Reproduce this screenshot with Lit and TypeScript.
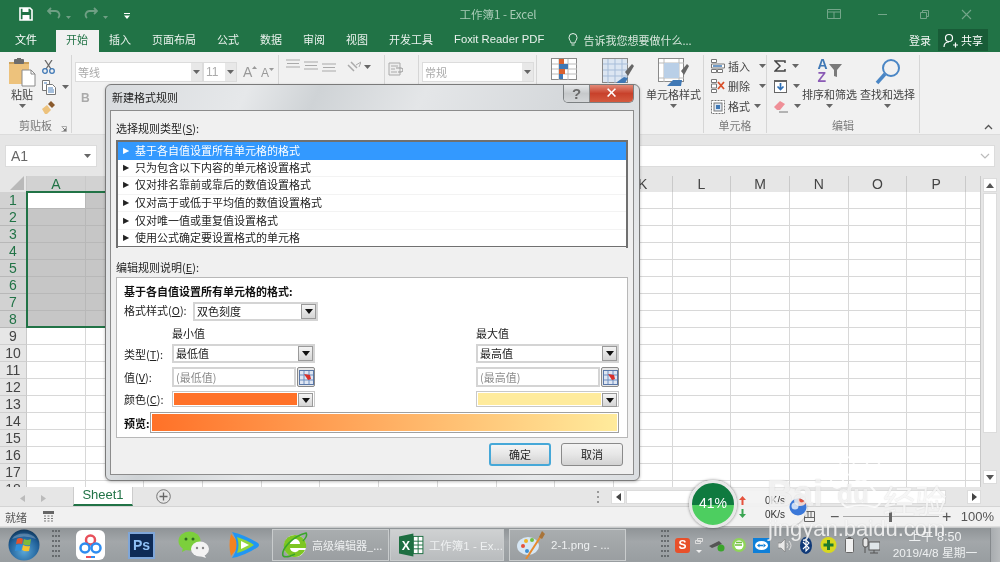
import { LitElement, html, css, svg } from "lit";
import { customElement } from "lit/decorators.js";

const caret = html`<svg class="caret" width="7" height="4" viewBox="0 0 7 4"><path d="M0 0h7L3.500 4z" fill="#666"/></svg>`;
const tri = html`<svg width="8" height="5" viewBox="0 0 8 5"><path d="M0 0h8L4 5z" fill="#111"/></svg>`;
const refIcon = html`<svg width="15" height="15" viewBox="0 0 15 15"><rect x=".5" y=".5" width="14" height="14" fill="#dfe6f2" stroke="#5a78a8"/><path d="M1 5h13M1 10h13M5 1v13M10 1v13" stroke="#6f8fc0"/><path d="M5 4l6 1 1 4-3 1z" fill="#d9302a"/></svg>`;

const ddBtn = html`<span class="ddb">${tri}</span>`;

const columns = "ABCDEFGHIJKLMNOPQ".split("");
const visibleHeader = (c: string) => ("AB".includes(c) || "KLMNOP".includes(c) ? c : "");
const rowsN = Array.from({ length: 18 }, (_, i) => i + 1);

const rules = [
  "基于各自值设置所有单元格的格式",
  "只为包含以下内容的单元格设置格式",
  "仅对排名靠前或靠后的数值设置格式",
  "仅对高于或低于平均值的数值设置格式",
  "仅对唯一值或重复值设置格式",
  "使用公式确定要设置格式的单元格",
];

const tabs = ["插入", "页面布局", "公式", "数据", "审阅", "视图", "开发工具", "Foxit Reader PDF"];

const saveIcon = html`<svg width="14" height="14" viewBox="0 0 14 14"><path d="M1 1h10l2 2v10H1z" fill="none" stroke="#fff" stroke-width="1.6"/><rect x="3.500" y="1" width="6" height="4" fill="#fff"/><rect x="3.500" y="8" width="7" height="5" fill="#fff"/></svg>`;
const undoIcon = html`<svg width="14" height="12" viewBox="0 0 14 12"><path d="M4 1L1 4l3 3M1 4h7a4 4 0 0 1 3 7" fill="none" stroke="#6f9f84" stroke-width="1.8"/></svg>`;
const redoIcon = html`<svg width="14" height="12" viewBox="0 0 14 12"><path d="M10 1l3 3-3 3M13 4H6a4 4 0 0 0-3 7" fill="none" stroke="#6f9f84" stroke-width="1.8"/></svg>`;
const smallDown = html`<svg width="5" height="3" viewBox="0 0 5 3"><path d="M0 0h5L2.500 3z" fill="#6f9f84"/></svg>`;
const qatMore = html`<svg width="6" height="6" viewBox="0 0 6 6"><path d="M0 0h6v1H0zM0 2.500h6L3 6z" fill="#fff"/></svg>`;

const pasteIcon = html`<svg width="27" height="30" viewBox="0 0 27 30"><path d="M0 4h20v22H0z" fill="#edc27c"/><path d="M0 4h20v2H0z" fill="#c9a05c"/><rect x="5" y="1" width="10" height="5" rx="1" fill="#6d6d6d"/><rect x="8" y="0" width="4" height="2" fill="#6d6d6d"/><path d="M13 12h9l4 4v12H13z" fill="#fff" stroke="#8a8a8a"/><path d="M22 12v4h4" fill="none" stroke="#8a8a8a"/></svg>`;
const cutIcon = html`<svg width="13" height="14" viewBox="0 0 13 14"><path d="M3 0l6 9M10 0L4 9" stroke="#6a6a6a" stroke-width="1.300"/><circle cx="3" cy="11" r="2.300" fill="none" stroke="#3f78b5" stroke-width="1.300"/><circle cx="10" cy="11" r="2.300" fill="none" stroke="#3f78b5" stroke-width="1.300"/></svg>`;
const copyIcon = html`<svg width="14" height="15" viewBox="0 0 14 15"><path d="M.5.500h7v10h-7z" fill="#fff" stroke="#777"/><path d="M4.500 4.500h6l3 3v7h-9z" fill="#fff" stroke="#777"/><path d="M6 8h5M6 10h6M6 12h6M2 3h3" stroke="#4a7fb8"/></svg>`;
const brushIcon = html`<svg width="13" height="13" viewBox="0 0 13 13"><path d="M0 8l5-4 4 5-4 4H3z" fill="#edc27c"/><path d="M6 3l3-3 4 4-3 3z" fill="#8a5a2c"/></svg>`;
const launcher = html`<svg width="6" height="6" viewBox="0 0 6 6"><path d="M.5.500h5v5h-5" fill="none" stroke="#999" stroke-width=".8"/><path d="M1.500 1.500l3 3M4.500 2.500v2h-2" fill="none" stroke="#555" stroke-width=".8"/></svg>`;
const aUp = html`<span class="fA">A<svg width="5" height="3" viewBox="0 0 5 3"><path d="M0 3h5L2.500 0z" fill="#999"/></svg></span>`;
const aDn = html`<span class="fA small">A<svg width="5" height="3" viewBox="0 0 5 3"><path d="M0 0h5L2.500 3z" fill="#999"/></svg></span>`;
const alignIcon = (o: number) => html`<svg class="al" width="14" height="11" style="margin-top:${o}px" viewBox="0 0 14 11"><path d="M0 1h14M1 4.500h12M0 8h14" stroke="#aaa" stroke-width="1.100"/></svg>`;
const orientIcon = html`<svg width="14" height="14" viewBox="0 0 14 14"><path d="M1 5l6 6M4 2l6 6" stroke="#aaa" stroke-width="1.500"/><path d="M9 5l5-3-2 5" fill="none" stroke="#aaa"/></svg>`;
const wrapIcon = html`<svg width="15" height="15" viewBox="0 0 15 15"><path d="M1 1h11v12H1z" fill="#eee" stroke="#aaa"/><path d="M3 4h7M3 7h4M3 10h6" stroke="#aaa"/><path d="M8 6h5a1.500 1.500 0 0 1 0 4H10" fill="none" stroke="#999"/></svg>`;

const condIcon = html`<svg width="30" height="32" viewBox="0 0 30 32"><rect x=".5" y=".5" width="25" height="21" fill="#fff" stroke="#8a8a8a"/><path d="M8 1v21M17 1v21M1 6h25M1 11h25M1 16h25" stroke="#bbb"/><rect x="8" y="1" width="5" height="5" fill="#d9602e"/><rect x="8" y="6" width="9" height="5" fill="#3f78b5"/><rect x="8" y="11" width="6" height="5" fill="#d9602e"/><rect x="8" y="16" width="4" height="5" fill="#3f78b5"/></svg>`;
const tblIcon = html`<svg width="32" height="32" viewBox="0 0 32 32"><rect x=".5" y=".5" width="25" height="24" fill="#dce6f2" stroke="#8a8a8a"/><path d="M6 1v24M13 1v24M20 1v24M1 6h25M1 12h25M1 18h25" stroke="#a7bdd9"/><path d="M23 14l7-8 2 2-6 10z" fill="#666"/><path d="M15 24l7-5 4 1-3 5H15z" fill="#3f78b5"/></svg>`;
const cellStyleIcon = html`<svg width="32" height="31" viewBox="0 0 32 31"><rect x=".5" y=".5" width="25" height="23" fill="#fff" stroke="#8a8a8a"/><path d="M1 5h25M1 20h25M6 1v23M21 1v23" stroke="#bbb"/><rect x="6" y="5" width="15" height="15" fill="#b9cfe7"/><path d="M23 13l6-7 2 2-5 9z" fill="#666"/><path d="M9 28l6-6h9l-1 6z" fill="#3f78b5"/></svg>`;
const insIcon = html`<svg width="14" height="14" viewBox="0 0 14 14"><path d="M.5.500h5v3h-5zM.5 10.500h5v3h-5z" fill="#fff" stroke="#777"/><path d="M6.500 10.500h5v3h-5z" fill="#fff" stroke="#777"/><path d="M.5 5h13v4H.5z" fill="#fff" stroke="#777"/><path d="M2 7h9" stroke="#3f78b5" stroke-width="1.500"/></svg>`;
const delIcon = html`<svg width="14" height="14" viewBox="0 0 14 14"><path d="M.5.500h5v3h-5zM.5 10.500h5v3h-5zM.5 5h5v4h-5z" fill="#fff" stroke="#777"/><path d="M7 3l6 7M13 3l-6 7" stroke="#d9502a" stroke-width="1.800"/></svg>`;
const fmtIcon = html`<svg width="14" height="15" viewBox="0 0 14 15"><rect x=".5" y="1.500" width="13" height="13" fill="#fff" stroke="#777" stroke-dasharray="2 1"/><rect x="3" y="4" width="8" height="8" fill="#dce6f2" stroke="#777"/><rect x="5" y="6" width="4" height="4" fill="#3f78b5"/></svg>`;
const sigma = html`<svg width="12" height="12" viewBox="0 0 12 12"><path d="M11 3V1H1l5 5-5 5h10V9" fill="none" stroke="#444" stroke-width="1.500"/></svg>`;
const fillIcon = html`<svg width="13" height="13" viewBox="0 0 13 13"><rect x=".5" y=".5" width="12" height="12" fill="#fff" stroke="#666"/><path d="M1 1h11v1H1z" fill="#666"/><path d="M6.500 3v6M3.500 6.500l3 3 3-3" fill="none" stroke="#2f6fb5" stroke-width="1.700"/></svg>`;
const eraser = html`<svg width="14" height="13" viewBox="0 0 14 13"><path d="M0 7l6-6 5 3-5 6H3z" fill="#ef8f97"/><path d="M5 12h9" stroke="#777"/></svg>`;
const sortIcon = html`<svg width="13" height="14" viewBox="0 0 13 14"><path d="M0 0h13L8 6v7l-3-1V6z" fill="#7a7a7a"/></svg>`;
const findIcon = html`<svg width="26" height="27" viewBox="0 0 26 27"><circle cx="16" cy="10" r="8" fill="none" stroke="#4a86c5" stroke-width="2"/><path d="M10 16L2 25" stroke="#4a86c5" stroke-width="3.500"/></svg>`;
const ribbonDisp = html`<svg width="14" height="10" viewBox="0 0 14 10"><path d="M.5.500h13v9H.5zM1 3h12M7 3v6" fill="none" stroke="#74a68a"/></svg>`;
const minIcon = html`<svg width="9" height="1"><rect width="9" height="1" fill="#74a68a"/></svg>`;
const maxIcon = html`<svg width="9" height="9" viewBox="0 0 9 9"><path d="M.5 2.500h6v6h-6zM2.500 2.500v-2h6v6h-2" fill="none" stroke="#74a68a"/></svg>`;
const closeIcon = html`<svg width="11" height="11" viewBox="0 0 11 11"><path d="M1 1l9 9M10 1l-9 9" stroke="#74a68a" stroke-width="1.100"/></svg>`;
const bulb = html`<svg width="10" height="14" viewBox="0 0 10 14"><path d="M3 10C3 8 1 7 1 4.500a4 4 0 0 1 8 0C9 7 7 8 7 10zM3.500 12h3" fill="none" stroke="#e8f0ea"/></svg>`;
const person = html`<svg width="16" height="15" viewBox="0 0 16 15"><circle cx="6" cy="5" r="3.500" fill="none" stroke="#fff" stroke-width="1.200"/><path d="M1 14c0-3 2-5 5-5M10 12h5M12.500 9.500v5" fill="none" stroke="#fff" stroke-width="1.200"/></svg>`;

const orb = html`<svg width="32" height="32" viewBox="0 0 32 32"><defs><radialGradient id="o" cx=".5" cy=".7" r=".7"><stop offset="0" stop-color="#5aa7d8"/><stop offset=".7" stop-color="#1f5f98"/><stop offset="1" stop-color="#0f3557"/></radialGradient></defs><circle cx="16" cy="16" r="15.500" fill="url(#o)"/><path d="M9 10q3-2 6 0l-1 5q-3-1-6 0z" fill="#e5532d"/><path d="M16 10q3 2 7 0l-1 6q-4 1-7-1z" fill="#7fba3a"/><path d="M8 16q3-1 6 0l-1 6q-3-1-6 0z" fill="#2f8fdc"/><path d="M15 16q3 2 7 1l-1 5q-4 1-7-1z" fill="#f6c32b"/><path d="M4 10a13 9 0 0 1 24 0q-12-5-24 0z" fill="#fff" opacity=".25"/></svg>`;
const dots = html`<svg class="grip" width="8" height="30" viewBox="0 0 8 30">${[0, 1, 2, 3, 4, 5].map((r) => svg`<path d="M0 ${r * 5 + 1}h2M3 ${r * 5 + 1}h2M6 ${r * 5 + 1}h2" stroke="#55595c" stroke-width="1.500"/>`)}</svg>`;
const netdisk = html`<svg width="29" height="30" viewBox="0 0 29 30"><rect width="29" height="30" rx="6" fill="#fff"/><circle cx="14.500" cy="10" r="4.500" fill="none" stroke="#e8505b" stroke-width="2.500"/><circle cx="9" cy="18" r="4.500" fill="none" stroke="#2d8cf0" stroke-width="2.500"/><circle cx="20" cy="18" r="4.500" fill="none" stroke="#2d8cf0" stroke-width="2.500"/><path d="M10 27h5" stroke="#e8505b" stroke-width="2"/><path d="M15 27h4" stroke="#2d8cf0" stroke-width="2"/></svg>`;
const wechat = html`<svg width="31" height="28" viewBox="0 0 31 28"><ellipse cx="11.500" cy="10" rx="11" ry="9.500" fill="#7ccf3c"/><path d="M5 16l-1 5 6-3z" fill="#7ccf3c"/><ellipse cx="22" cy="18" rx="9" ry="7.500" fill="#f3f3f3"/><path d="M26 23l2 4-6-2z" fill="#f3f3f3"/><circle cx="8" cy="8" r="1.500" fill="#2f6a20"/><circle cx="15" cy="8" r="1.500" fill="#2f6a20"/><circle cx="19" cy="17" r="1.200" fill="#888"/><circle cx="25" cy="17" r="1.200" fill="#888"/></svg>`;
const tvideo = html`<svg width="31" height="28" viewBox="0 0 31 28"><path d="M2 3q-3 11 0 22l9-11z" fill="#f5821f"/><path d="M3 1q13 3 26 11Q31 14 29 16 15 25 3 27q9-13 0-26z" fill="#2196f3"/><path d="M8 6q10 3 17 8-7 5-17 8 3-8 0-16z" fill="#8fd43a"/><path d="M12 10l8 4-8 4z" fill="#fff"/></svg>`;
const ieIcon = html`<svg width="28" height="26" viewBox="0 0 28 26"><circle cx="14" cy="14" r="11" fill="#fff"/><path d="M14 3a11 11 0 1 0 10 15h-6a5 5 0 0 1-9-2h16a11 11 0 0 0-11-13zm-5 9a5 5 0 0 1 10 0z" fill="#7ec623"/><path d="M2 24C0 17 12 4 25 1c2 3-1 6-3 8M2 24c3 2 8 0 12-2" fill="none" stroke="#3aa52b" stroke-width="1.600"/></svg>`;
const paintIcon = html`<svg width="28" height="28" viewBox="0 0 28 28"><ellipse cx="11" cy="15" rx="11" ry="9" fill="#d6e7f5"/><circle cx="6" cy="15" r="2" fill="#e5533d"/><circle cx="9" cy="10" r="2" fill="#f0b429"/><circle cx="15" cy="9" r="2" fill="#6fbf40"/><circle cx="10" cy="20" r="2" fill="#3f8fd2"/><path d="M9 28L24 5" stroke="#e68a2e" stroke-width="2"/><path d="M22 6l3-6 3 3-3 5z" fill="#a8743a"/></svg>`;

@customElement("app-root")
export class AppRoot extends LitElement {
  static styles = css`
    :host { display: block; width: 1000px; height: 562px; overflow: hidden; }
    * { box-sizing: border-box; }
    .page { position: relative; width: 1000px; height: 562px; overflow: hidden; display: flex; flex-direction: column; filter: blur(.35px);
      font-family: "Noto Sans CJK SC", "Liberation Sans", sans-serif; font-size: 11px; color: #444; background: #e6e6e6; }
    .latin { font-family: "Liberation Sans", "Noto Sans CJK SC", sans-serif; }

    .title { height: 28px; background: #217346; display: grid; grid-template-columns: 1fr auto 1fr; align-items: center; flex: none; }
    .qat { display: flex; align-items: center; padding-left: 19px; }
    .qat .u { margin-left: 14px; } .qat .d { margin-left: 5px; } .qat .m { margin-left: 16px; }
    .qat .r { margin-left: 13px; }
    .ttl { color: #a9cbb7; font-size: 11.500px; margin-right: 4px; white-space: nowrap; }
    .win { display: flex; align-items: center; justify-content: flex-end; padding-right: 13px; gap: 0; }
    .win span { display: flex; justify-content: center; width: 42px; }
    .win .b1 { margin-right: 6px; }

    .tabs { height: 24px; background: #217346; display: flex; align-items: center; flex: none; color: #eaf2ed; }
    .tab { padding: 0 10.5px; height: 24px; line-height: 22px; white-space: nowrap; }
    .tab.file { margin-left: 4.500px; margin-right: 8px; color: #fff; }
    .tab.on { background: #f1f1f1; color: #217346; margin-top: 2px; height: 22px; line-height: 19px; }
    .tab.foxit { font-size: 11.300px; padding-right: 24px; }
    .tell { display: flex; align-items: center; gap: 5px; color: #d7e6dc; }
    .right { margin-left: auto; display: flex; align-items: center; height: 24px; color: #f0f5f2; margin-right: 12px; }
    .login { margin-right: 7px; }
    .share { background: #185c37; width: 50px; height: 22px; display: flex; align-items: center; justify-content: center; gap: 2px; color: #fff; }

    .ribbon { height: 83px; background: #f1f1f1; display: flex; flex: none; border-bottom: 1px solid #dcdcdc; }
    .grp { height: 78px; margin-top: 3px; border-right: 1px solid #d6d6d6; display: flex; flex-direction: column; flex: none; position: relative; }
    .body { height: 62px; display: flex; }
    .glabel { height: 14px; line-height: 14px; text-align: center; color: #7a7a7a; margin-top: 1px; }
    .g1 { width: 72px; } .g2 { width: 207px; } .g3 { width: 106px; } .g4 { width: 34px; } .g5 { width: 118px; } .g6 { width: 167px; } .g7 { width: 63px; } .g8 { width: 153px; }
    .launch { position: absolute; right: 4px; bottom: 1px; display: flex; }
    .big { display: flex; flex-direction: column; align-items: center; padding-top: 3px; white-space: nowrap; color: #444; }
    .big .ic { height: 29px; display: flex; align-items: flex-start; }
    .big .tx { margin-top: 0; height: 14px; line-height: 14px; }
    .big .cr { margin-top: 3px; display: flex; }
    .paste { margin-left: 10px; width: 24px; }
    .smalls { display: flex; flex-direction: column; margin-left: 8px; padding-top: 2px; }
    .smalls > div { height: 21px; display: flex; align-items: center; gap: 6px; }
    .fgrp { padding: 7px 0 0 3px; color: #aaa; }
    .frow { display: flex; align-items: center; }
    .combo { height: 20px; background: #fff; border: 1px solid #dcdcdc; display: flex; align-items: center; padding-left: 2px; color: #aaa; position: relative; }
    .combo .ar { margin-left: auto; width: 11px; height: 18px; background: #e8e8e8; display: flex; align-items: center; justify-content: center; }
    .c1 { width: 128px; } .c2 { width: 34px; font-size: 12px; } .c3 { width: 112px; }
    .fA { color: #999; font-size: 14px; display: inline-flex; align-items: flex-start; margin-left: 6px; width: 12px; font-family: "Liberation Sans", sans-serif; }
    .fA.small { font-size: 12px; margin-top: 2px; }
    .fA svg { margin-top: 2px; flex: none; }
    .bold { color: #aaa; font-weight: 700; font-size: 12px; margin: 9px 0 0 6px; font-family: "Liberation Sans", sans-serif; }
    .algn { display: flex; padding: 4px 0 0 7px; gap: 4px; align-items: flex-start; }
    .algn .or { margin-left: 7px; display: flex; gap: 3px; align-items: center; margin-top: 1px; }
    .wrapi { padding: 7px 0 0 3px; display: flex; }
    .cells { display: flex; flex-direction: column; padding: 1px 0 0 7px; }
    .cells > div { height: 20px; display: flex; align-items: center; gap: 3px; color: #444; white-space: nowrap; }
    .cells svg { flex: none; }
    .cells .cc { margin-left: 6px; display: flex; }
    .cells .fm { margin-left: 1px; display: flex; }
    .edit { display: flex; }
    .edcol { display: flex; flex-direction: column; padding: 1px 0 0 7px; width: 35px; }
    .edcol > div { height: 20px; display: flex; align-items: center; gap: 6px; }
    .sort { width: 55px; }
    .find { width: 55px; margin-left: 3px; }
    .az { display: flex; align-items: flex-start; height: 29px; }
    .azl { display: flex; flex-direction: column; font: 700 14px/12.500px "Liberation Sans", sans-serif; margin-right: 1px; }
    .azl b:first-child { color: #3f78b5; } .azl b:last-child { color: #8a5ab5; }
    .azf { margin-top: 6px; }
    .collapse { margin-left: auto; margin-right: 7px; margin-top: 72px; display: flex; }
    .m1 { margin-left: 14px; } .m2 { margin-left: 21px; } .m3 { margin-left: 12px; }

    .fbar { height: 41px; flex: none; display: flex; padding: 10px 5px 9px 5px; background: #e6e6e6; justify-content: space-between; }
    .namebox { width: 92px; background: #fff; border: 1px solid #dcdcdc; display: flex; align-items: center; padding: 0 5px; font: 14px "Liberation Sans", sans-serif; color: #666; justify-content: space-between; }
    .formula { width: 860px; background: #fff; border: 1px solid #dcdcdc; display: flex; align-items: center; justify-content: flex-end; padding-right: 4px; }

    .sheet { flex: none; height: 311px; display: flex; background: #e6e6e6; }
    .gridwrap { width: 981px; height: 311px; overflow: hidden; position: relative; background: #fff; border-right: 1px solid #c8c8c8; }
    .grid { display: grid; grid-template-columns: 27px repeat(17, 58.7px); grid-auto-rows: 17px; }
    .hd { background: #e6e6e6; border-right: 1px solid #c9c9c9; text-align: center; font: 14px/16px "Liberation Sans", sans-serif; color: #444; height: 16px; }
    .corner { position: relative; }
    .corner svg { position: absolute; right: 2px; bottom: 2px; }
    .hd.on { background: #d2d2d2; color: #217346; }
    .rh { background: #e6e6e6; border-bottom: 1px solid #cfcfcf; border-right: 1px solid #c9c9c9; text-align: center; font: 14px/17px "Liberation Sans", sans-serif; color: #444; margin-top: -1px; height: 17px; }
    .rh.on { background: #d2d2d2; color: #217346; border-bottom-color: #b8b8b8; }
    .c { border-right: 1px solid #d8d8d8; border-bottom: 1px solid #d8d8d8; margin-top: -1px; height: 17px; }
    .c.on { background: #c6c6c6; border-color: #b8b8b8; }
    .c.a1 { background: #fff; }
    .selbox { position: absolute; left: 26px; top: 15px; width: 300px; height: 137px; border: 2px solid #217346; pointer-events: none; }
    .vbar { width: 18px; display: flex; flex-direction: column; align-items: center; padding: 2px 0 0 0; position: relative; }
    .sb { width: 14px; height: 14px; background: #fff; border: 1px solid #dcdcdc; display: flex; align-items: center; justify-content: center; flex: none; }
    .vth { width: 14px; height: 240px; background: #fff; border: 1px solid #dcdcdc; margin-top: 1px; flex: none; }
    .vbar .sb.last { margin-top: auto; margin-bottom: 3px; }

    .sheettabs { height: 20px; flex: none; display: flex; align-items: flex-start; background: #e6e6e6; border-bottom: 1px solid #d4d4d4; }
    .nav { display: flex; gap: 16px; padding: 8px 0 0 20px; width: 73px; }
    .stab { width: 60px; height: 19px; background: #fff; border-left: 1px solid #ccc; border-right: 1px solid #ccc; border-bottom: 2px solid #217346; color: #217346; font: 13px/16px "Liberation Sans", sans-serif; text-align: center; }
    .plus { margin: 2px 0 0 23px; display: flex; }
    .hs { margin-left: auto; margin-right: 19px; margin-top: 3px; display: flex; width: 370px; height: 14px; gap: 1px; }
    .hs .th { flex: none; width: 320px; background: #fff; border: 1px solid #dcdcdc; }
    .hs .sp { flex: 1; }
    .grip2 { position: absolute; left: 597px; top: 491px; width: 2px; height: 12px; background: repeating-linear-gradient(#999 0 2px, transparent 2px 5px); }

    .status { height: 20px; flex: none; background: #f1f1f1; display: flex; align-items: center; padding: 0 6px 0 5px; color: #555; border-bottom: 1px solid #ddd; }
    .status .cal { margin-left: 16px; display: flex; }
    .st-r { margin-left: auto; display: flex; align-items: center; }
    .pgv { margin-right: 15px; }
    .slider { width: 96px; height: 1px; background: #aaa; margin: 0 3px 0 3px; position: relative; }
    .slider i { position: absolute; left: 46px; top: -5px; width: 3px; height: 11px; background: #666; }
    .zoom { font: 13px "Liberation Sans", sans-serif; margin-left: 9px; color: #555; }
    .pm { font: 16px/16px "Liberation Sans", sans-serif; color: #555; width: 10px; text-align: center; }

    .task { flex: 1; background: linear-gradient(#8f9497, #a3a7aa 40%, #989da0); border-top: 1px solid #c8cacb; display: flex; align-items: center; position: relative; color: #eef0f1; }
    .orb { margin-left: 8px; display: flex; }
    .task .grip { margin-left: 12px; }
    .pin { display: flex; justify-content: center; flex: none; }
    .p1 { margin-left: 16px; width: 29px; } .p2 { margin-left: 23px; width: 27px; } .p3 { margin-left: 23px; width: 31px; } .p4 { margin-left: 20px; width: 31px; }
    .ps { width: 27px; height: 27px; background: #0e2a55; border: 2px solid #7fa6d8; color: #8fc0f5; font: 700 14px/23px "Liberation Sans", sans-serif; text-align: center; }
    .tb { height: 32px; display: flex; align-items: center; gap: 3px; padding-left: 8px; border: 1px solid #c9cccd; font-size: 11px; flex: none; white-space: nowrap; background: linear-gradient(#a9adaf, #9a9ea1); }
    .tb .l { font-family: "Liberation Sans", "Noto Sans CJK SC", sans-serif; font-size: 11.500px; }
    .t1 { width: 117px; margin-left: 12px; } .t2 { width: 114px; margin-left: 1px; background: linear-gradient(#cfd1d2, #b9bcbe); gap: 5px; } .t3 { width: 117px; margin-left: 5px; padding-left: 7px; gap: 6px; }
    .xl { position: relative; width: 26px; height: 24px; display: flex; }
    .tray { display: flex; align-items: center; margin-left: 35px; }
    .tray .grip { margin-left: 0; margin-right: 6px; }
    .clock { margin-left: auto; width: 110px; text-align: center; font: 12.500px/16px "Liberation Sans", "Noto Sans CJK SC", sans-serif; color: #eef0f1; white-space: nowrap; }
    .clock div:last-child { font-size: 11.800px; }
    .desk { width: 10px; height: 100%; flex: none; background: linear-gradient(90deg, #a8acaf, #b8bbbd); border-left: 1px solid #85898c; }
    .ti { display: flex; flex: none; }
    .sg { width: 15px; height: 15px; background: #e8502a; border-radius: 3px; color: #fff; font: 700 12px/15px "Liberation Sans", sans-serif; justify-content: center; }
    .tv { width: 17px; height: 15px; background: #0e7fd8; align-items: center; justify-content: center; }
    .t-1 { margin-left: 5px; } .t-2 { margin-left: 6px; } .t-3 { margin-left: 7px; } .t-4 { margin-left: 8px; }

    .dlg { position: absolute; left: 105px; top: 84px; width: 535px; height: 397px; border: 1px solid #7a7a7a; border-radius: 6px; padding: 0 5px 5px 4px; display: flex; flex-direction: column; box-shadow: 0 1px 3px rgba(0,0,0,.25);
      background: linear-gradient(115deg, #d8dbde 0%, #e6e8ea 20%, #cfd3d6 30%, #e4e6e8 45%, #d5d8db 65%, #e6e8ea 85%, #dadde0 100%); }
    .dt { height: 25px; flex: none; display: flex; align-items: flex-start; position: relative; }
    .dt .nm { margin: 5px 0 0 2px; color: #222; line-height: 15px; }
    .dbtns { position: absolute; right: 0; top: 0; display: flex; height: 18px; border: 1px solid #7c8082; border-top: none; border-radius: 0 0 5px 5px; overflow: hidden; }
    .db1 { width: 26px; background: linear-gradient(#e6e8ea, #c6c9cb 50%, #d4d6d8); color: #6a6a6a; text-align: center; font: 700 15px/17px "Liberation Sans", sans-serif; border-right: 1px solid #888; }
    .db2 { width: 43px; background: linear-gradient(#e28a78, #c8412b 50%, #d45a3f); color: #fff; text-align: center; font: 700 15px/17px "DejaVu Sans", sans-serif; }
    .client { flex: 1; background: #f0f0f0; border: 1px solid #8c8c8c; padding: 10px 5px 0 5px; display: flex; flex-direction: column; color: #222; }
    .lab { height: 15px; line-height: 15px; }
    u { text-underline-offset: 1px; }
    .list { margin-top: 4px; height: 108px; background: #fff; border: 2px solid #707070; flex: none; }
    .rule { height: 17.600px; line-height: 15px; display: flex; align-items: center; padding: 0 0 1px 5px; border-bottom: 1px solid #f3f3f3; color: #222; }
    .rule.on { background: #3399ff; color: #fff; border: none; }
    .rule .a { width: 12px; font-size: 8px; font-family: "DejaVu Sans", sans-serif; }
    .lab2 { margin-top: 12px; }
    .panel { margin-top: 2px; height: 161px; background: #fff; border: 1px solid #b8b8b8; padding: 6px 8px 0 7px; flex: none; }
    .ptitle { height: 14px; line-height: 14px; font-weight: 700; color: #111; }
    .style { display: flex; margin-top: 4px; }
    .style label { width: 69px; line-height: 14px; margin-top: 1px; }
    .fs { height: 19px; border: 2px solid #d4d4d4; background: #fff; display: flex; align-items: center; padding: 0 0 0 2px; color: #222; line-height: 13px; }
    .fs.st { width: 125px; }
    .ddb { margin-left: auto; width: 15px; height: 15px; background: linear-gradient(#f4f4f4, #d5d5d5); border: 1px solid #9a9a9a; display: flex; align-items: center; justify-content: center; flex: none; }
    .form { display: grid; grid-template-columns: 48px 143px 161px 143px; grid-auto-rows: min-content; row-gap: 4px; margin-top: 5px; align-items: center; }
    .hdr { height: 14px; line-height: 14px; }
    .inp { height: 20px; display: flex; gap: 0; align-items: stretch; }
    .inp .box { flex: 1; border: 2px solid #d4d4d4; background: #fff; color: #8c8c8c; display: flex; align-items: center; padding-left: 2px; }
    .rb { width: 18px; border: 1px solid #8a8a8a; background: #e6e6e6; border-radius: 2px; display: flex; align-items: center; justify-content: center; margin-left: 1px; }
    .col { height: 16px; border: 1px solid #c8c8c8; background: #fff; padding: 1px; display: flex; align-items: stretch; }
    .sw { flex: 1; }
    .sw.o { background: #ff7128; } .sw.y { background: #ffeb9c; }
    .col .ddb { margin-left: 1px; height: 14px; }
    .prev { display: flex; margin-top: 5px; align-items: center; }
    .prev b { width: 26px; color: #111; }
    .bar { flex: 1; height: 21px; border: 1px solid #a0a0a0; padding: 1px; }
    .bar div { height: 100%; background: linear-gradient(90deg, #ff7128, #ffeb9c); }
    .btns { display: flex; justify-content: flex-end; gap: 10px; margin-top: 5px; padding-right: 5px; }
    .btn { width: 62px; height: 23px; border: 1px solid #8a8a8a; border-radius: 3px; background: linear-gradient(#f4f4f4, #e6e6e6 50%, #d2d2d2); text-align: center; line-height: 21px; color: #222; }
    .btn.def { border: 2px solid #46a8d8; line-height: 19px; }

    .widget { position: absolute; left: 689px; top: 480px; width: 118px; height: 48px; display: flex; align-items: center; }
    .pill { position: absolute; left: 24px; top: 8px; width: 94px; height: 38px; background: rgba(242,242,242,.92); border-radius: 0 19px 19px 0; box-shadow: 0 1px 2px rgba(0,0,0,.25); display: flex; align-items: center; padding-left: 26px; }
    .arrows { display: flex; flex-direction: column; gap: 4px; width: 26px; flex: none; }
    .rates { display: flex; flex-direction: column; gap: 1px; font: 10px/13px "Liberation Sans", sans-serif; color: #333; }
    .ball { margin-left: 4px; display: flex; }
    .cir { position: relative; width: 48px; height: 48px; border-radius: 50%; border: 3px solid #e8e8e8; box-shadow: 0 0 3px rgba(0,0,0,.5); background: linear-gradient(#0f7a3f 0 52%, #4dce60 52%); color: #fff; display: flex; align-items: center; justify-content: center; font: 14px "Liberation Sans", sans-serif; padding-bottom: 2px; }

    .wm { position: absolute; pointer-events: none; color: rgba(255,255,255,.8); text-shadow: 0 0 1px rgba(150,150,150,.45); white-space: nowrap; }
    .wm1 { left: 767px; top: 470px; font: 700 36px/48px "Liberation Sans", sans-serif; color: rgba(255,255,255,.7); }
    .wm2 { left: 837px; top: 477px; font: 700 26px/34px "Liberation Sans", sans-serif; color: rgba(255,255,255,.7); }
    .wm3 { left: 883px; top: 477px; font: 32px/44px "Noto Sans CJK SC", sans-serif; }
    .wm4 { left: 768px; top: 514px; font: 22px/30px "Liberation Sans", sans-serif; }
    .paw { position: absolute; left: 830px; top: 456px; pointer-events: none; }
  `;

  render() {
    return html`<div class="page">
      <div class="title">
        <div class="qat">${saveIcon}<span class="u">${undoIcon}</span><span class="d">${smallDown}</span><span class="r">${redoIcon}</span><span class="d">${smallDown}</span><span class="m">${qatMore}</span></div>
        <div class="ttl">工作簿1 - Excel</div>
        <div class="win"><span class="b1">${ribbonDisp}</span><span>${minIcon}</span><span>${maxIcon}</span><span>${closeIcon}</span></div>
      </div>
      <div class="tabs">
        <div class="tab file">文件</div><div class="tab on">开始</div>
        ${tabs.map((t) => html`<div class="tab ${t.startsWith("Foxit") ? "foxit latin" : ""}">${t}</div>`)}
        <div class="tell">${bulb}<span>告诉我您想要做什么...</span></div>
        <div class="right"><span class="login">登录</span><span class="share">${person}共享</span></div>
      </div>

      <div class="ribbon">
        <div class="grp g1"><div class="body">
            <div class="big paste"><div class="ic">${pasteIcon}</div><div class="tx">粘贴</div><div class="cr">${caret}</div></div>
            <div class="smalls"><div>${cutIcon}</div><div>${copyIcon}${caret}</div><div>${brushIcon}</div></div>
          </div><div class="glabel">剪贴板</div><span class="launch">${launcher}</span></div>
        <div class="grp g2"><div class="body fgrp"><div>
            <div class="frow"><div class="combo c1">等线<span class="ar">${caret}</span></div><div class="combo c2 latin">11<span class="ar">${caret}</span></div>${aUp}${aDn}</div>
            <div class="bold">B</div></div></div></div>
        <div class="grp g3"><div class="body algn">${alignIcon(0)}${alignIcon(2)}${alignIcon(4)}<span class="or">${orientIcon}${caret}</span></div></div>
        <div class="grp g4"><div class="body wrapi">${wrapIcon}</div></div>
        <div class="grp g5"><div class="body fgrp"><div class="combo c3">常规<span class="ar">${caret}</span></div></div></div>
        <div class="grp g6"><div class="body">
          <span class="big m1">${condIcon}</span>
          <span class="big m2">${tblIcon}</span>
          <div class="big m3"><div class="ic">${cellStyleIcon}</div><div class="tx">单元格样式</div><div class="cr">${caret}</div></div>
        </div></div>
        <div class="grp g7"><div class="body cells">
            <div>${insIcon}<span>插入</span><span class="cc">${caret}</span></div>
            <div>${delIcon}<span>删除</span><span class="cc">${caret}</span></div>
            <div>${fmtIcon}<span>格式</span><span class="fm">${caret}</span></div>
          </div><div class="glabel">单元格</div></div>
        <div class="grp g8"><div class="body edit">
            <div class="edcol"><div>${sigma}${caret}</div><div>${fillIcon}${caret}</div><div>${eraser}${caret}</div></div>
            <div class="big sort"><div class="az"><span class="azl"><b>A</b><b>Z</b></span><span class="azf">${sortIcon}</span></div><div class="tx">排序和筛选</div><div class="cr">${caret}</div></div>
            <div class="big find"><div class="ic">${findIcon}</div><div class="tx">查找和选择</div><div class="cr">${caret}</div></div>
          </div><div class="glabel">编辑</div></div>
        <span class="collapse"><svg width="9" height="6" viewBox="0 0 9 6"><path d="M1 5l3.500-3.500L8 5" fill="none" stroke="#555" stroke-width="1.300"/></svg></span>
      </div>

      <div class="fbar">
        <div class="namebox">A1 ${caret}</div>
        <div class="formula"><svg width="10" height="6" viewBox="0 0 10 6"><path d="M1 1l4 4 4-4" fill="none" stroke="#bbb" stroke-width="1.200"/></svg></div>
      </div>

      <div class="sheet">
        <div class="gridwrap">
          <div class="grid">
            <div class="hd corner"><svg width="14" height="14" viewBox="0 0 14 14"><path d="M14 0v14H0z" fill="#b9b9b9"/></svg></div>
            ${columns.map((c, i) => html`<div class="hd ${i < 2 ? "on" : ""}">${visibleHeader(c)}</div>`)}
            ${rowsN.map((r) => html`<div class="rh ${r <= 8 ? "on" : ""}">${r}</div>
              ${columns.map((_, i) => html`<div class="c ${r <= 8 && i < 2 ? "on" : ""} ${r === 1 && i === 0 ? "a1" : ""}"></div>`)}`)}
          </div>
          <div class="selbox"></div>
        </div>
        <div class="vbar">
          <div class="sb"><svg width="8" height="5" viewBox="0 0 8 5"><path d="M0 5h8L4 0z" fill="#555"/></svg></div>
          <div class="vth"></div>
          <div class="sb last"><svg width="8" height="5" viewBox="0 0 8 5"><path d="M0 0h8L4 5z" fill="#555"/></svg></div>
        </div>
      </div>

      <div class="sheettabs">
        <div class="nav"><svg width="5" height="7" viewBox="0 0 5 7"><path d="M5 0v7L0 3.500z" fill="#bbb"/></svg><svg width="5" height="7" viewBox="0 0 5 7"><path d="M0 0v7l5-3.500z" fill="#bbb"/></svg></div>
        <div class="stab">Sheet1</div>
        <span class="plus"><svg width="15" height="15" viewBox="0 0 15 15"><circle cx="7.500" cy="7.500" r="6.800" fill="none" stroke="#777"/><path d="M7.500 3.500v8M3.500 7.500h8" stroke="#666" stroke-width="1.300"/></svg></span>
        <div class="hs">
          <div class="sb"><svg width="5" height="8" viewBox="0 0 5 8"><path d="M5 0v8L0 4z" fill="#444"/></svg></div>
          <div class="th"></div><div class="sp"></div>
          <div class="sb"><svg width="5" height="8" viewBox="0 0 5 8"><path d="M0 0v8l5-4z" fill="#444"/></svg></div>
        </div>
      </div>
      <div class="grip2"></div>

      <div class="status">
        <span>就绪</span>
        <span class="cal"><svg width="11" height="11" viewBox="0 0 11 11"><rect width="11" height="3" fill="#666"/><path d="M1 5h2M4.500 5h2M8 5h2M1 7.500h2M4.500 7.500h2M8 7.500h2M1 10h2M4.500 10h2M8 10h2" stroke="#777" stroke-width="1.200"/></svg></span>
        <div class="st-r">
          <svg class="pgv" width="11" height="11" viewBox="0 0 11 11"><path d="M.5.500h10v10H.5zM.5 6.500h10M4 .5v6M7 .5v6" fill="none" stroke="#666"/></svg>
          <span class="pm">−</span><div class="slider"><i></i></div><span class="pm">+</span>
          <span class="zoom">100%</span>
        </div>
      </div>

      <div class="task">
        <span class="orb">${orb}</span>${dots}
        <span class="pin p1">${netdisk}</span>
        <span class="pin p2"><span class="ps">Ps</span></span>
        <span class="pin p3">${wechat}</span>
        <span class="pin p4">${tvideo}</span>
        <div class="tb t1">${ieIcon}<span>高级编辑器_...</span></div>
        <div class="tb t2"><svg class="xl" width="26" height="24" viewBox="0 0 26 24"><path d="M0 3l15-3v24L0 21z" fill="#1e6f42"/><rect x="15" y="3" width="10" height="18" fill="#fff" stroke="#1e6f42"/><path d="M15 8h10M15 12h10M15 16h10M20 3v18" stroke="#1e6f42"/><text x="3" y="17" font-family="Liberation Sans" font-weight="700" font-size="13" fill="#fff">X</text></svg><span class="l">工作簿1 - Ex...</span></div>
        <div class="tb t3">${paintIcon}<span class="l">2-1.png - ...</span></div>
        <div class="tray">
          ${dots}
          <span class="ti sg">S</span>
          <span class="ti t-1"><svg width="8" height="16" viewBox="0 0 8 16"><path d="M2.500 1.500h5v3h-5zM.5 3.500h5v3h-5z" fill="none" stroke="#ddd"/><path d="M1 13h6l-3 3z" fill="#eee"/></svg></span>
          <span class="ti t-2"><svg width="16" height="13" viewBox="0 0 16 13"><path d="M0 7l10-5 3 3L3 9z" fill="#555"/><circle cx="12" cy="9" r="3.500" fill="#3aa52b"/></svg></span>
          <span class="ti t-3"><svg width="14" height="14" viewBox="0 0 14 14"><circle cx="7" cy="7" r="7" fill="#8fd45a"/><circle cx="7" cy="7" r="4.500" fill="#fff"/><path d="M3 7h7M4 4.500h6" stroke="#6fc03a" stroke-width="1.300"/></svg></span>
          <span class="ti tv t-3"><svg width="13" height="9" viewBox="0 0 13 9"><ellipse cx="6.500" cy="4.500" rx="6.500" ry="4.500" fill="#fff"/><path d="M2 4.500l2.500-2v4zM11 4.500l-2.500-2v4zM4 3.800h5v1.400H4z" fill="#0e7fd8"/></svg></span>
          <span class="ti t-4"><svg width="15" height="15" viewBox="0 0 15 15"><path d="M0 5h3l4-4v13l-4-4H0z" fill="#e8e8e8" stroke="#777" stroke-width=".6"/><path d="M9 5q2 2.500 0 5M11 3q4 4.500 0 9" fill="none" stroke="#ddd"/></svg></span>
          <span class="ti t-3"><svg width="12" height="17" viewBox="0 0 12 17"><ellipse cx="6" cy="8.500" rx="6" ry="8.500" fill="#103a78"/><path d="M3 5l6 6-3 3V3l3 3-6 6" fill="none" stroke="#fff" stroke-width="1.100"/></svg></span>
          <span class="ti t-4"><svg width="17" height="16" viewBox="0 0 17 16"><circle cx="8.500" cy="8" r="8" fill="#d8d820"/><path d="M8.500 3v10M3.500 8h10" stroke="#1e7a2e" stroke-width="3"/></svg></span>
          <span class="ti t-4"><svg width="9" height="16" viewBox="0 0 9 16"><rect x=".5" y="1.500" width="8" height="14" rx="1" fill="#f2f2f2" stroke="#666"/><rect x="3" y="0" width="3" height="2" fill="#666"/></svg></span>
          <span class="ti t-4"><svg width="18" height="17" viewBox="0 0 18 17"><rect x="1" y="1" width="5" height="9" rx="2" fill="#e8e8e8" stroke="#555"/><rect x="7" y="5" width="11" height="8" fill="#dfe6ea" stroke="#555"/><path d="M12 13v3M8 16h8M3 10v6" stroke="#555"/></svg></span>
        </div>
        <div class="clock"><div>上午 8:50</div><div>2019/4/8 星期一</div></div>
        <div class="desk"></div>
      </div>

      <div class="dlg">
        <div class="dt"><span class="nm">新建格式规则</span><div class="dbtns"><div class="db1">?</div><div class="db2">✕</div></div></div>
        <div class="client">
          <div class="lab">选择规则类型(<u>S</u>):</div>
          <div class="list">
            ${rules.map((r, i) => html`<div class="rule ${i === 0 ? "on" : ""}"><span class="a">▶</span>${r}</div>`)}
          </div>
          <div class="lab lab2">编辑规则说明(<u>E</u>):</div>
          <div class="panel">
            <div class="ptitle">基于各自值设置所有单元格的格式:</div>
            <div class="style"><label>格式样式(<u>O</u>):</label><div class="fs st">双色刻度${ddBtn}</div></div>
            <div class="form">
              <span></span><div class="hdr">最小值</div><span></span><div class="hdr">最大值</div>
              <label>类型(<u>T</u>):</label><div class="fs">最低值${ddBtn}</div><span></span><div class="fs">最高值${ddBtn}</div>
              <label>值(<u>V</u>):</label><div class="inp"><div class="box">(最低值)</div><div class="rb">${refIcon}</div></div><span></span><div class="inp"><div class="box">(最高值)</div><div class="rb">${refIcon}</div></div>
              <label>颜色(<u>C</u>):</label><div class="col"><div class="sw o"></div>${ddBtn}</div><span></span><div class="col"><div class="sw y"></div>${ddBtn}</div>
            </div>
            <div class="prev"><b>预览:</b><div class="bar"><div></div></div></div>
          </div>
          <div class="btns"><div class="btn def">确定</div><div class="btn">取消</div></div>
        </div>
      </div>

      <div class="widget">
        <div class="pill">
          <div class="arrows">
            <svg width="7" height="9" viewBox="0 0 7 9"><path d="M3.500 0L7 4H4.500v5h-2V4H0z" fill="#e5533d"/></svg>
            <svg width="7" height="9" viewBox="0 0 7 9"><path d="M3.500 9L7 5H4.500V0h-2v5H0z" fill="#3aa552"/></svg>
          </div>
          <div class="rates"><span>0K/s</span><span>0K/s</span></div>
          <span class="ball"><svg width="18" height="18" viewBox="0 0 18 18"><circle cx="9" cy="9" r="8.500" fill="#3b78d8"/><path d="M9 .5a8.500 8.500 0 0 1 8 5.500L10 8z" fill="#e5533d"/><circle cx="6" cy="8" r="3.500" fill="#fff" opacity=".75"/></svg></span>
        </div>
        <div class="cir">41%</div>
      </div>

      <svg class="paw" width="60" height="60" viewBox="0 0 60 60" fill="none" stroke="rgba(255,255,255,.8)" stroke-width="2"><ellipse cx="17" cy="10" rx="7" ry="9"/><ellipse cx="43" cy="12" rx="7" ry="9"/><ellipse cx="7" cy="24" rx="6" ry="8"/><path d="M25 26q6-5 12 0l12 14q4 8-4 11-14-3-28 0-8-3-4-11z"/></svg>
      <span class="wm wm1">Bai</span><span class="wm wm2">du</span><span class="wm wm3">经验</span><span class="wm wm4">jingyan.baidu.com</span>
    </div>`;
  }
}
